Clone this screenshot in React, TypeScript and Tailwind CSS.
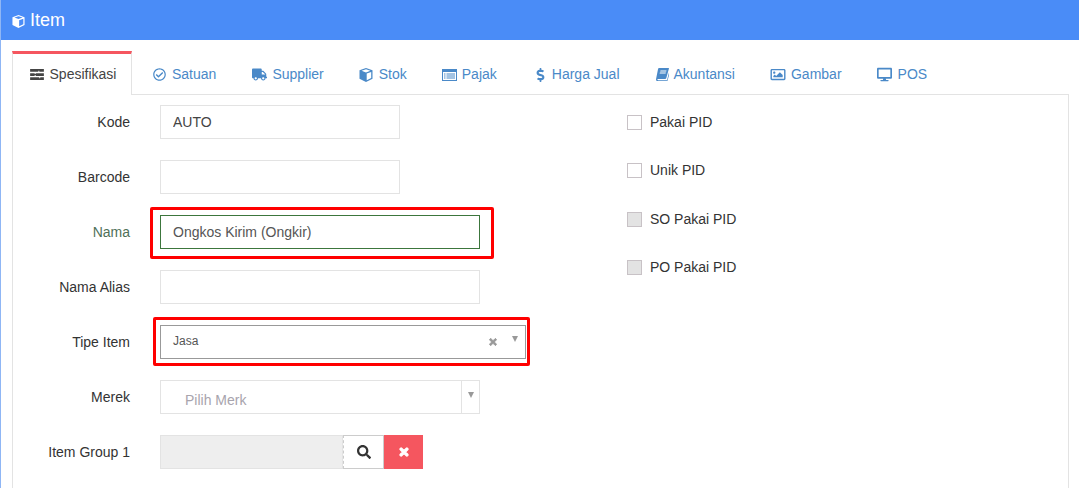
import React from 'react';
import { FaDesktop, FaDollarSign, FaRegCheckCircle, FaRegImage, FaSearch, FaTimes, FaTruck } from 'react-icons/fa';

// the tabs use Font Awesome 4 glyphs, a few of them look too different in the packaged set
function TasksIcon({ className }: { className?: string }) {
  return (
    <svg viewBox="0 0 15 12" className={className} fill="currentColor">
      <path d="M0 0h15v3H10v-1H9v1H0zM0 4.5h5v1h1v-1h9v3H6v-1H5v1H0zM0 9h10v1h1v-1h4v3H0z" />
    </svg>
  );
}

function CubeIcon({ className }: { className?: string }) {
  return (
    <svg viewBox="0 0 14 14" className={className} fill="currentColor">
      <path d="M7 0l6.5 2.3v8.4L7 14 .5 10.7V2.3zM2.6 2.8L7 4.4l4.4-1.6L7 1.3zM7.7 12.2l4.5-2.3V4L7.7 5.6z" fillRule="evenodd" />
    </svg>
  );
}

function ListIcon({ className }: { className?: string }) {
  return (
    <svg viewBox="0 0 15 12" className={className} fill="currentColor">
      <path
        fillRule="evenodd"
        d="M0 0h15v12H0zM1 3v8h13V3zM2 4.5h1.5v1H2zM4.5 4.5H13v1H4.5zM2 6.5h1.5v1H2zM4.5 6.5H13v1H4.5zM2 8.5h1.5v1H2zM4.5 8.5H13v1H4.5z"
      />
    </svg>
  );
}

function BookIcon({ className }: { className?: string }) {
  return (
    <svg viewBox="0 0 13 13" className={className} fill="currentColor">
      <path
        fillRule="evenodd"
        d="M3 0h9.5c.4 0 .5.3.4.7L10.3 10c-.2.7-.6 1-1.3 1H2c-.5 0-.8.3-.6.7.1.3.4.5.9.5h8.7l2.1-8 .6.5-2.4 8.8H2c-1.2 0-2-1-2-2.2L2 1.2C2.200.5 2.500 0 3 0zM4.500 2.500l-.3 1h6l.3-1zM3.900 4.500l-.3 1h6l.3-1z"
      />
    </svg>
  );
}

function HeavyX({ className }: { className?: string }) {
  return <FaTimes className={className} stroke="currentColor" strokeWidth={50} />;
}

const tabs = [
  { label: 'Satuan', icon: FaRegCheckCircle, ml: 'ml-[21px]', box: 'w-[19px]', size: 'h-[13px] w-[13px]' },
  { label: 'Supplier', icon: FaTruck, ml: 'ml-[36px]', box: 'w-[20px]', size: 'h-[15px] w-[15px]' },
  { label: 'Stok', icon: CubeIcon, ml: 'ml-[35px]', box: 'w-[20px]', size: 'h-[14px] w-[14px]' },
  { label: 'Pajak', icon: ListIcon, ml: 'ml-[35px]', box: 'w-[20px]', size: 'h-[12px] w-[15px]' },
  { label: 'Harga Jual', icon: FaDollarSign, ml: 'ml-[39px]', box: 'w-[16px]', size: 'h-[14px] w-[9px]' },
  { label: 'Akuntansi', icon: BookIcon, ml: 'ml-[36px]', box: 'w-[18px]', size: 'h-[13px] w-[13px]' },
  { label: 'Gambar', icon: FaRegImage, ml: 'ml-[35px]', box: 'w-[21px]', size: 'h-[15px] w-[16px]' },
  { label: 'POS', icon: FaDesktop, ml: 'ml-[35px]', box: 'w-[21px]', size: 'h-[15px] w-[15px]' },
];

function Row({ label, green, children }: { label: string; green?: boolean; children: React.ReactNode }) {
  return (
    <div className="flex h-[34px] items-center">
      <label className={`w-[117px] text-right text-[14px] ${green ? 'text-[#4f7058]' : 'text-[#333]'}`}>{label}</label>
      <div className="ml-[30px]">{children}</div>
    </div>
  );
}

function Check({ label, disabled }: { label: string; disabled?: boolean }) {
  return (
    <div className="flex h-[15px] items-center gap-[8px] text-[14px] text-[#333]">
      <span className={`h-[15px] w-[15px] border border-[#c8c2c6] ${disabled ? 'bg-[#e3e3e3]' : 'bg-white'}`} />
      {label}
    </div>
  );
}

export default function App() {
  return (
    <div className="h-[488px] w-[1079px] overflow-hidden border-l border-[#8fb6f5] bg-white font-['Liberation_Sans',Arial,sans-serif]">
      <header className="flex h-10 items-center gap-[5px] bg-[#4a8cf7] pl-[11px] text-white">
        <CubeIcon className="mt-[2px] h-[13px] w-[13px]" />
        <span className="text-[18px]">Item</span>
      </header>

      <div className="relative ml-[11px] mr-[10px] mt-[11px] h-[437px]">
        <div className="flex h-11 border-b border-[#e3e3e3]">
          <div className="-mb-px flex h-11 w-[120px] items-center justify-center gap-[6px] border-x border-t-[3px] border-x-[#e3e3e3] border-t-[#f5565f] bg-white pl-[2px] text-[14px] text-[#444]">
            <TasksIcon className="h-[11px] w-[14px]" />
            Spesifikasi
          </div>
          {tabs.map(tab => (
            <div key={tab.label} className={`flex items-center pt-[4px] text-[14px] text-[#4a89c8] ${tab.ml}`}>
              <span className={`flex items-center ${tab.box}`}>
                <tab.icon className={tab.size} />
              </span>
              {tab.label}
            </div>
          ))}
        </div>

        <div className="flex h-[393px] border-x border-[#e3e3e3]">
          <div className="flex w-[614px] flex-col gap-[21px] pt-[10px]">
            <Row label="Kode">
              <input readOnly value="AUTO" className="block h-[34px] w-[240px] border border-[#e3e3e3] px-3 text-[14px] text-[#444]" />
            </Row>
            <Row label="Barcode">
              <input readOnly className="block h-[34px] w-[240px] border border-[#e3e3e3] px-3 text-[14px]" />
            </Row>
            <Row label="Nama" green>
              <input readOnly value="Ongkos Kirim (Ongkir)" className="block h-[34px] w-[320px] border border-[#3c763d] px-3 text-[14px] text-[#555]" />
            </Row>
            <Row label="Nama Alias">
              <input readOnly className="block h-[34px] w-[320px] border border-[#e3e3e3] px-3 text-[14px]" />
            </Row>
            <Row label="Tipe Item">
              <div className="flex h-[34px] w-[366px] items-center border border-[#999] pb-[2px] pl-3 text-[12px] text-[#555]">
                <span className="flex-1">Jasa</span>
                <HeavyX className="mt-[2px] h-[10px] w-[10px] text-[#999]" />
                <span className="mb-[5px] ml-[14px] mr-[7px] border-x-[3.5px] border-t-[6px] border-x-transparent border-t-[#999]" />
              </div>
            </Row>
            <Row label="Merek">
              <div className="flex h-[34px] w-[320px] border border-[#e3e3e3]">
                <span className="flex-1 pl-6 pt-[9px] text-[14px] text-[#a8a4ad]">Pilih Merk</span>
                <span className="flex w-[18px] justify-center border-l border-[#e3e3e3] pt-[11px]">
                  <span className="h-0 border-x-[3.5px] border-t-[6px] border-x-transparent border-t-[#999]" />
                </span>
              </div>
            </Row>
            <Row label="Item Group 1">
              <div className="flex h-[34px]">
                <span className="w-[183px] border border-[#e3e3e3] bg-[#eeeeee]" />
                <span className="flex w-[41px] items-center justify-center border border-[#ccc] bg-white text-[#333] [border-left-style:dashed]">
                  <FaSearch className="h-[14px] w-[14px]" />
                </span>
                <span className="flex w-[39px] items-center justify-center bg-[#f5565f] text-white">
                  <HeavyX className="h-[12px] w-[12px]" />
                </span>
              </div>
            </Row>
          </div>

          <div className="flex flex-col gap-[33.4px] pt-[20px]">
            <Check label="Pakai PID" />
            <Check label="Unik PID" />
            <Check label="SO Pakai PID" disabled />
            <Check label="PO Pakai PID" disabled />
          </div>
        </div>

        {/* red marker boxes drawn over the form */}
        <div className="absolute left-[138px] top-[156px] h-[52px] w-[344px] rounded-[2px] border-[3px] border-[#f00]" />
        <div className="absolute left-[141px] top-[266px] h-[49px] w-[377px] rounded-[2px] border-[3px] border-[#f00]" />
      </div>
    </div>
  );
}
